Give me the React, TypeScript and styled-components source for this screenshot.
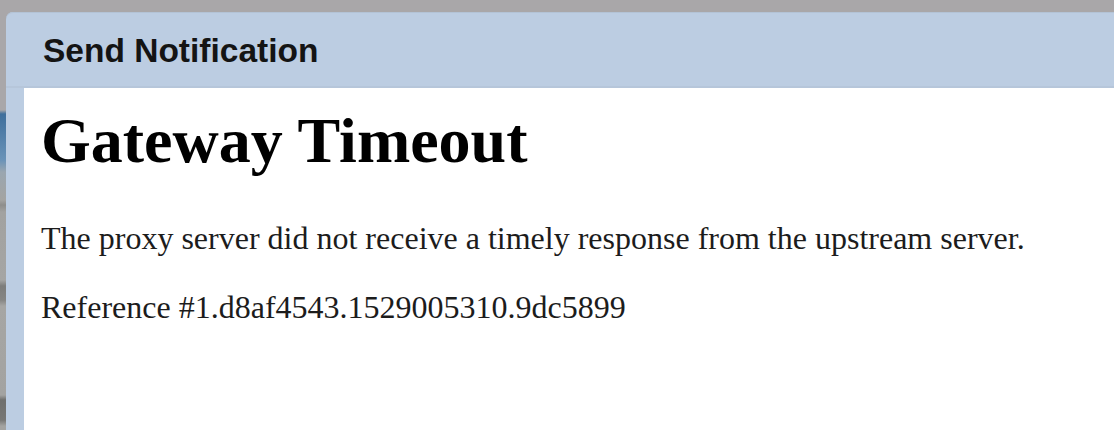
import styled, { createGlobalStyle } from 'styled-components';

//#region page
const GlobalStyle = createGlobalStyle`
  html, body {
    margin: 0;
    padding: 0;
    background: #a9a7a9;
  }
`;

const Page = styled.div`
  display: flex;
  width: 1114px;
  height: 430px;
  overflow: hidden;
  background: #a9a7a9;
`;

// the page behind the dialog, only a sliver of it shows on the left
const Backdrop = styled.div`
  flex: 0 0 6px;
  background: linear-gradient(
    to bottom,
    #a9a7a9 0px,
    #a9a7a9 110px,
    #3f6f9c 114px,
    #6a93b8 160px,
    #9aa6b0 172px,
    #a4a4a2 200px,
    #8e8e8c 205px,
    #a2a2a0 212px,
    #a5a5a3 280px,
    #7d7d7b 286px,
    #868684 300px,
    #a6a6a4 306px,
    #a3a3a1 395px,
    #6f6f6d 400px,
    #777775 420px,
    #a3a3a1 426px
  );
`;
//#endregion

//#region dialog
const Dialog = styled.div`
  flex: 1;
  display: flex;
  flex-direction: column;
  margin-top: 12px;
  background: #bccde2;
  border-top-left-radius: 7px;
  box-shadow: inset 0 1px 0 #b3c3d6;
`;

const Header = styled.div`
  height: 74px;
  display: flex;
  align-items: center;
  padding: 2px 0 0 37px;
  font-family: 'Liberation Sans', Arial, sans-serif;
  font-weight: bold;
  font-size: 33.5px;
  color: #141414;
  box-shadow: inset 0 -2px 0 #b6c6da;
`;

const Body = styled.div`
  flex: 1;
  display: flex;
  flex-direction: column;
  margin-left: 18px;
  padding-left: 17px;
  background: #ffffff;
  font-family: 'Liberation Serif', 'Times New Roman', serif;
  color: #1c1c1c;
`;

const Title = styled.h1`
  margin: 18px 0 0;
  font-size: 64px;
  line-height: 70px;
  font-weight: bold;
  color: #000;
`;

const Text = styled.p<{ $gap: number }>`
  margin: ${(p) => p.$gap}px 0 0;
  font-size: 32px;
  line-height: 36px;
`;
//#endregion

export default function App() {
  return (
    <Page>
      <GlobalStyle />
      <Backdrop />
      <Dialog>
        <Header>Send Notification</Header>
        <Body>
          <Title>Gateway Timeout</Title>
          <Text $gap={44}>The proxy server did not receive a timely response from the upstream server.</Text>
          <Text $gap={33}>Reference #1.d8af4543.1529005310.9dc5899</Text>
        </Body>
      </Dialog>
    </Page>
  );
}
